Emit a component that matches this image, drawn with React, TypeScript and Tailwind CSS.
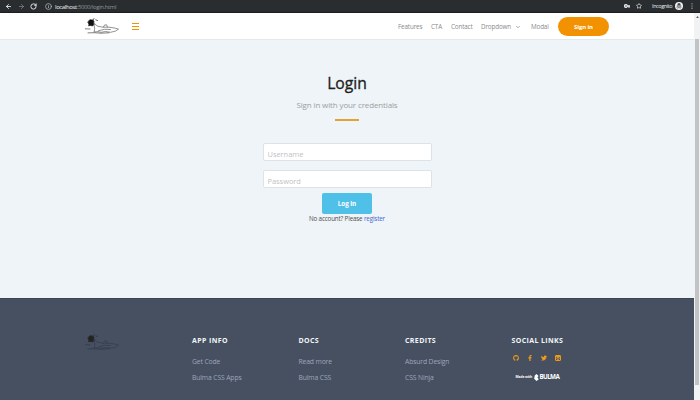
import React from "react";
import { FaGithub, FaFacebookF, FaTwitter } from "react-icons/fa";
import { ArrowLeft, ArrowRight, RotateCw, Info, Star, ChevronDown } from "lucide-react";

function Swimmer({ className, dark }: { className: string; dark?: boolean }) {
  const line = dark ? "#303743" : "#4b4b4b";
  return (
    <svg viewBox="0 0 34 16" className={className} fill="none" stroke={line} strokeWidth="0.6" strokeLinecap="round">
      <path d="M3.500 3 5 1.700 8 2 9 3.500 8.500 5 9 6.500 7.500 8 5.500 7.500 3.500 7.800 4 6 3 5Z" fill={dark ? "#242322" : "#111"} stroke={dark ? "#242322" : "#111"} />
      <path d="M8 2 9 .5M10.800 1.800l1.700.7" strokeWidth="0.9" />
      <path d="M9 4.500l1.500 2.300L13 8.300l5 .9h6l6 .9 3.500 1-3 2-5 1.200-5-.8-4.500.8-3-.7L9 14l.7-3L9 6.500M18.500 9l1-2 2.200-.2.7 2.200M13.500 12.700l6-1.400 6 .2" />
      <path d="M0 10.800l5 .2M3 14.900l6-.2 7 .5 8-.4" strokeWidth="0.7" />
    </svg>
  );
}

function BrowserBar() {
  return (
    <header className="flex h-[13px] shrink-0 items-center border-b border-[#1c1f21] bg-[#292d30] text-[#e8eaed]">
      <div className="flex w-[55px] items-center pl-[5px]">
        <ArrowLeft className="size-[7px]" strokeWidth={3} />
        <ArrowRight className="ml-[6px] size-[7px] text-[#85898c]" strokeWidth={2.5} />
        <RotateCw className="ml-[5px] size-[7px]" strokeWidth={3.2} />
        <Info className="ml-[8px] size-[7px] text-[#b9bcbf]" strokeWidth={2.5} />
      </div>
      <div className="pt-px text-[6px] leading-none tracking-[-0.38px] text-[#8f9396]">
        <span className="text-[#f0f1f2]">localhost</span>:5000/login.html
      </div>
      <div className="ml-auto flex items-center">
        <svg viewBox="0 0 12 8" className="h-[4px] w-[6px]" fill="currentColor">
          <path fillRule="evenodd" d="M4 0a4 4 0 1 0 3.500 5.500H9V8h2V5.500h1v-3H7.500A4 4 0 0 0 4 0m0 2.700a1.300 1.300 0 1 1 0 2.600 1.300 1.300 0 0 1 0-2.600" />
        </svg>
        <Star className="ml-[6px] size-[6px]" strokeWidth={2.8} />
        <span className="ml-[10px] w-[23px] whitespace-nowrap pt-px text-[5.500px] leading-none tracking-[-0.4px]">Incognito</span>
        <svg viewBox="0 0 16 16" className="size-[8px]">
          <circle cx="8" cy="8" r="8" fill="#f2f3f4" />
          <path d="m5 7 1-4h4l1 4M3 8h10" fill="#44484b" stroke="#44484b" />
          <g fill="none" stroke="#44484b" strokeWidth="1.2"><circle cx="5.700" cy="10.800" r="1.700" /><circle cx="10.300" cy="10.800" r="1.700" /></g>
        </svg>
        <svg viewBox="0 0 2 7" className="ml-[8px] mr-[7px] h-[6px] w-[2px]" fill="#c9cbcd">
          <circle cx="1" cy="1" r=".7" /><circle cx="1" cy="3.500" r=".7" /><circle cx="1" cy="6" r=".7" />
        </svg>
      </div>
    </header>
  );
}

function Navbar() {
  return (
    <nav className="flex h-[27px] shrink-0 items-center border-b border-[#e3e8eb] bg-white text-[6.300px] leading-none text-[#8b8b8b] shadow-sm">
      <Swimmer className="ml-[85px] h-[16px] w-[34px]" />
      <div className="ml-[13px] flex w-[7px] flex-col gap-[2px]">
        <i className="h-px bg-[#f39200]" /><i className="h-px bg-[#f39200]" /><i className="h-px bg-[#f39200]" />
      </div>
      <div className="ml-[259px] flex items-center whitespace-nowrap tracking-[-0.15px]">
        <a className="w-[33px] pt-[2px]">Features</a>
        <a className="w-[20px] pt-[2px]">CTA</a>
        <a className="w-[30px] pt-[2px]">Contact</a>
        <a className="flex w-[50px] items-center justify-between pr-[10.500px] pt-[2px]">Dropdown<ChevronDown className="size-[6px]" strokeWidth={2.8} /></a>
        <a className="w-[27px] pt-[2px]">Modal</a>
        <button className="h-[19px] w-[51px] rounded-full bg-[#f39200] pt-[1px] text-[6px] font-bold tracking-[-0.15px] text-white">Sign in</button>
      </div>
    </nav>
  );
}

function Field({ label }: { label: string }) {
  return (
    <input placeholder={label} className="h-[18px] w-[169px] rounded-[2px] border border-[#dce3e8] bg-white px-[4px] pt-[3px] text-[7.500px] leading-none tracking-[-0.05px] placeholder:text-[#bfc2c4]" />
  );
}

function LoginForm() {
  return (
    <main className="flex h-[258px] shrink-0 flex-col items-center bg-[#eef4f7]">
      <h1 className="mt-[32px] h-[22px] text-[15.700px] font-medium leading-[22px] text-[#202020] [-webkit-text-stroke:0.3px_#202020]">Login</h1>
      <p className="mt-[5px] h-[12px] text-[8px] leading-[12px] tracking-[-0.13px] text-[#9b9fa1]">Sign in with your credentials</p>
      <div className="mt-[8px] h-[2px] w-[24px] bg-[#e3a233]" />
      <form className="mt-[22px] flex flex-col items-center gap-[9px]">
        <Field label="Username" />
        <Field label="Password" />
        <button type="button" className="-mt-[4px] h-[21px] w-[50px] rounded-[2px] bg-[#4fc0e8] pt-[1px] text-[6.300px] font-bold leading-none tracking-[-0.05px] text-white">Log in</button>
      </form>
      <p className="mt-[1px] h-[8px] text-[6.200px] leading-[8px] tracking-[-0.13px] text-[#4c4c4c]">No account? Please <a className="text-[#4263cf]">register</a></p>
    </main>
  );
}

function LinkColumn({ title, links }: { title: string; links: string[] }) {
  return (
    <section className="w-[106.500px] whitespace-nowrap">
      <h2 className="h-[10px] text-[7px] font-bold leading-[10px] tracking-[0.38px] text-[#f3f5f8]">{title}</h2>
      <ul className="mt-[8px] text-[6.800px] leading-[15.500px] tracking-[-0.14px] text-[#9aa6bd]">
        {links.map((link) => <li key={link}>{link}</li>)}
      </ul>
    </section>
  );
}

function Footer() {
  return (
    <footer className="flex h-[102px] shrink-0 border-t border-[#3d4654] bg-[#465061] pt-[37px]">
      <div className="w-[192px] pl-[85px]"><Swimmer dark className="-mt-[2px] h-[16px] w-[34px]" /></div>
      <LinkColumn title="APP INFO" links={["Get Code", "Bulma CSS Apps"]} />
      <LinkColumn title="DOCS" links={["Read more", "Bulma CSS"]} />
      <LinkColumn title="CREDITS" links={["Absurd Design", "CSS Ninja"]} />
      <section>
        <h2 className="h-[10px] whitespace-nowrap text-[7px] font-bold leading-[10px] tracking-[0.38px] text-[#f3f5f8]">SOCIAL LINKS</h2>
        <div className="ml-[1px] mt-[9px] flex h-[6px] gap-[8px] text-[#f09b18]">
          <FaGithub className="size-[6px]" /><FaFacebookF className="size-[6px]" /><FaTwitter className="size-[6px]" />
          <svg viewBox="0 0 12 12" className="size-[6px]" fill="none" stroke="currentColor" strokeWidth="2">
            <rect x="1" y="1" width="10" height="10" rx="1" /><path d="M1 3h10" /><circle cx="6" cy="6.500" r="2.300" />
          </svg>
        </div>
        <div className="ml-[4px] mt-[12px] flex h-[8px] items-center whitespace-nowrap text-white">
          <span className="w-[18px] text-[3.300px] font-bold leading-none tracking-[-0.1px]">Made with</span>
          <svg viewBox="0 0 8 12" className="h-[7px] w-[5px]" fill="currentColor"><path d="M0 8 1 2.500 4 0l3.500 3.500L5.500 6 8 9l-4 3Z" /></svg>
          <span className="ml-[1px] text-[6.300px] font-bold leading-none tracking-[-0.650px]">BULMA</span>
        </div>
      </section>
    </footer>
  );
}

export default function App() {
  return (
    <div className="flex h-[400px] w-[700px] flex-col overflow-hidden font-['Open_Sans',sans-serif]">
      <BrowserBar />
      <div className="flex h-[387px]">
        <div className="flex w-[694px] flex-col"><Navbar /><LoginForm /><Footer /></div>
        <aside className="flex w-[6px] flex-col items-center bg-[#f1f2f3]">
          <svg viewBox="0 0 4 3" className="mt-[3px] h-[2px] w-[3px]"><path d="M0 3 2 0l2 3Z" fill="#555" /></svg>
          <div className="mt-[21px] h-[346px] w-[4px] bg-[#c1c3c5]" />
        </aside>
      </div>
    </div>
  );
}
